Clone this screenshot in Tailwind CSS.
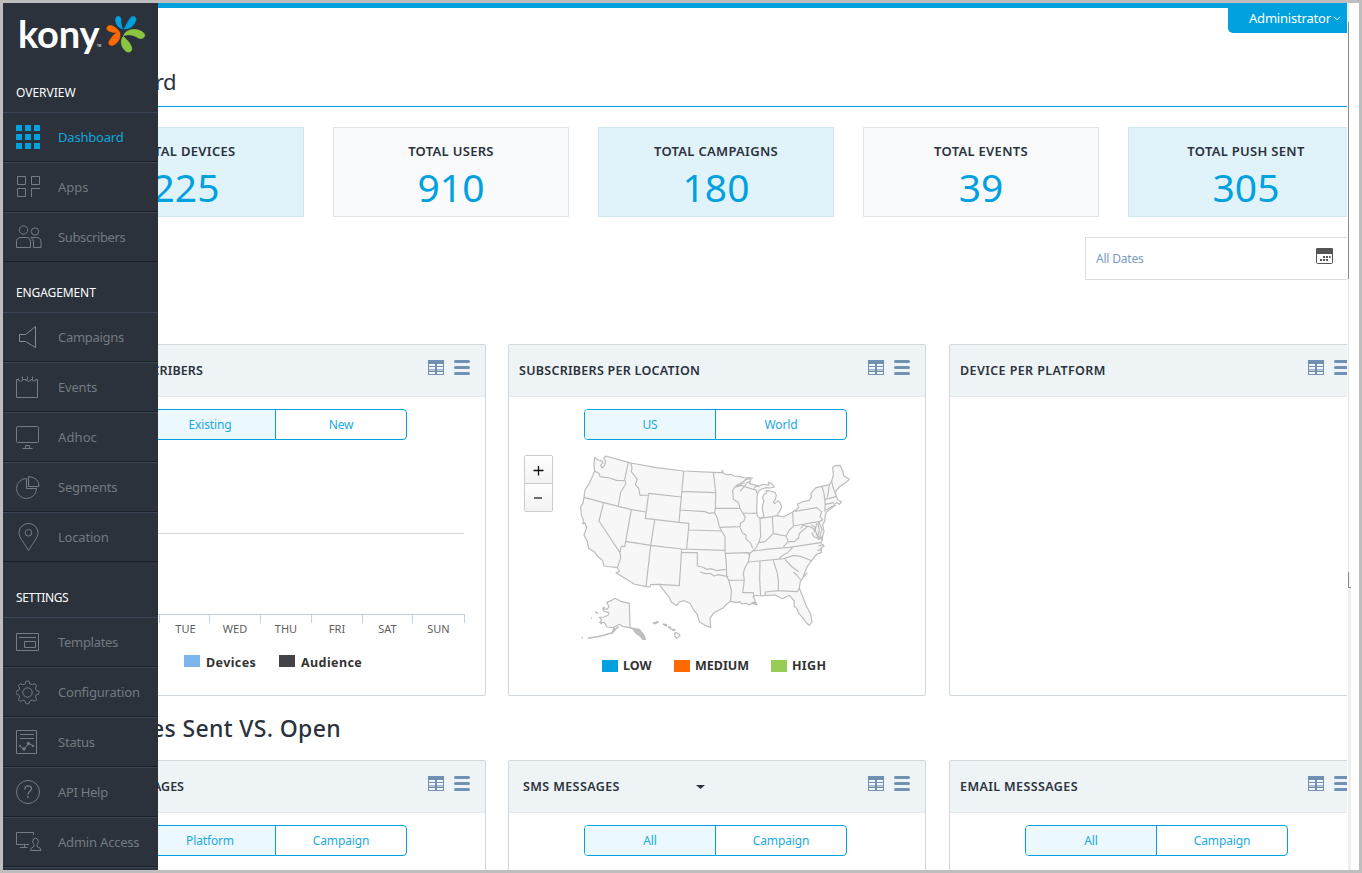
<!DOCTYPE html>
<html lang="en">
<head>
<meta charset="utf-8">
<title>Kony Dashboard</title>
<script src="https://cdn.jsdelivr.net/npm/@tailwindcss/browser@4"></script>
</head>
<body class="h-[873px] w-[1362px] overflow-hidden bg-white font-['Noto_Sans','Open_Sans',sans-serif] text-[#2a323c]">
<svg class="hidden">
  <symbol id="table" viewBox="0 0 48 45"><path fill="#7091b1" d="M0 0h48v45H0z"/><path fill="#f4f8fa" d="M3 12h18v6H3zM27 12h18v6H27zM3 21h18v6H3zM27 21h18v6H27zM3 36h18v6H3zM27 36h18v6H27z"/><path fill="#b5c6d7" d="M3 28h18v5H3zM27 28h18v5H27z"/></symbol>
  <symbol id="bars" viewBox="0 0 48 45"><path stroke="#7091b1" stroke-width="9" stroke-linecap="round" d="M4.500 4.500h39M4.500 22.500h39M4.500 40.500h39"/></symbol>
</svg>
<div class="relative flex h-full border-[3px] border-[#bebebe] bg-white">
  <main class="h-[867px] w-[1344px] shrink-0 overflow-hidden">
    <div class="flex h-[30px] items-start justify-end border-t-[5px] border-[#00a1de]">
      <div class="flex h-[25px] w-[119px] shrink-0 items-start rounded-bl-[5px] bg-[#00a1de] pl-[21px] text-[13px] leading-[20px] tracking-[-0.200px] text-white">Administrator<svg class="ml-[2px] mt-[8px] h-[5px] w-[8px]" viewBox="0 0 8 5" fill="none" stroke="#fff"><path d="M1 .8 4 3.800 7 .8"/></svg></div>
    </div>
    <div class="flex h-[74px] items-end border-b border-[#00a1de] pb-[10px] pl-[64px]"><h1 class="w-[109px] text-right text-[22px] leading-[30px] tracking-[-0.500px]">rd</h1></div>
    <section class="mt-5 flex gap-[29px] pl-[65px] text-center">
      <div class="h-[90px] w-[236px] shrink-0 border border-[#d3e6ef] bg-[#e1f3fa] pt-[13px]"><div class="text-[13px] font-semibold leading-[20px] tracking-[0.300px]">TOTAL DEVICES</div><div class="text-[39px] leading-[51px] text-[#00a1de]">225</div></div>
      <div class="h-[90px] w-[236px] shrink-0 border border-[#e2e5e6] bg-[#f8fafc] pt-[13px]"><div class="text-[13px] font-semibold leading-[20px] tracking-[0.300px]">TOTAL USERS</div><div class="text-[39px] leading-[51px] text-[#00a1de]">910</div></div>
      <div class="h-[90px] w-[236px] shrink-0 border border-[#d3e6ef] bg-[#e1f3fa] pt-[13px]"><div class="text-[13px] font-semibold leading-[20px] tracking-[0.300px]">TOTAL CAMPAIGNS</div><div class="text-[39px] leading-[51px] text-[#00a1de]">180</div></div>
      <div class="h-[90px] w-[236px] shrink-0 border border-[#e2e5e6] bg-[#f8fafc] pt-[13px]"><div class="text-[13px] font-semibold leading-[20px] tracking-[0.300px]">TOTAL EVENTS</div><div class="text-[39px] leading-[51px] text-[#00a1de]">39</div></div>
      <div class="h-[90px] w-[236px] shrink-0 border border-[#d3e6ef] bg-[#e1f3fa] pt-[13px]"><div class="text-[13px] font-semibold leading-[20px] tracking-[0.300px]">TOTAL PUSH SENT</div><div class="text-[39px] leading-[51px] text-[#00a1de]">305</div></div>
    </section>
    <div class="ml-[1082px] mt-5 flex h-[43px] w-[262px] items-center justify-between border-y border-l border-[#dcdcdc] pl-[10px] pr-[14px]">
      <span class="text-[12px] tracking-[-0.200px] text-[#7b9bbd]">All Dates</span>
      <svg class="mb-[5px] h-4 w-[17px]" viewBox="0 0 17 16"><rect x=".5" y=".5" width="16" height="15" rx="1" fill="#fff" stroke="#555"/><path fill="#555" d="M0 1l1-1h15l1 1v5H0zM7 8h2v2H7zM10 8h2v2h-2zM13 8h1.500v2H13zM4 11h2v2H4zM7 11h2v2H7zM10 11h2v2h-2z"/></svg>
    </div>
    <section class="mt-16 flex gap-[22px] pl-[65px]">
      <div class="h-[352px] w-[418px] shrink-0 rounded-[2px] border border-[#d0d7dd]">
        <div class="flex h-[52px] items-start border-b border-[#e2e8eb] bg-[#eef3f6] pt-[15px]">
          <h2 class="mt-px w-[134px] whitespace-nowrap text-right text-[12.500px] font-semibold leading-[20px] tracking-[0.100px]">SUBSCRIBERS</h2>
          <svg class="ml-auto h-[15px] w-4"><use href="#table"/></svg><svg class="ml-[10px] mr-[15px] h-[15px] w-4"><use href="#bars"/></svg>
        </div>
        <div class="ml-[75px] mt-3 flex h-[31px] w-[263px] rounded-[4px] border border-[#00a1de] text-center text-[12px] leading-[29px] tracking-[-0.150px] text-[#1ba9df]"><div class="w-[131px] rounded-l-[3px] border-r border-[#00a1de] bg-[#ebf8fe]">Existing</div><div class="flex-1">New</div></div>
        <div class="mr-[21px] mt-[93px] h-px bg-[#d5d8da]"></div>
        <div class="ml-[39px] mt-[80px] flex w-[357px] border-t border-r border-[#c0d0e0] text-center text-[11px] text-[#606060]">
          <div class="h-[8px] w-[51px] border-l border-[#c0d0e0] pt-[6px]">MON</div><div class="h-[8px] w-[50px] border-l border-[#c0d0e0] pt-[6px] pl-[2px]">TUE</div><div class="h-[8px] w-[51px] border-l border-[#c0d0e0] pt-[6px]">WED</div><div class="h-[8px] w-[51px] border-l border-[#c0d0e0] pt-[6px]">THU</div><div class="h-[8px] w-[51px] border-l border-[#c0d0e0] pt-[6px]">FRI</div><div class="h-[8px] w-[50px] border-l border-[#c0d0e0] pt-[6px]">SAT</div><div class="h-[8px] w-[52px] border-l border-[#c0d0e0] pt-[6px]">SUN</div>
        </div>
        <div class="ml-[115px] mt-[30px] flex items-center text-[12.500px] font-bold leading-[20px] tracking-[0.400px] text-[#333]"><i class="mb-[4px] mr-[6px] h-3 w-4 bg-[#7cb5ec]"></i><span class="w-[73px]">Devices</span><i class="mb-[4px] mr-[6px] h-3 w-4 bg-[#434348]"></i>Audience</div>
      </div>
      <div class="h-[352px] w-[418px] shrink-0 rounded-[2px] border border-[#d0d7dd]">
        <div class="flex h-[52px] items-start border-b border-[#e2e8eb] bg-[#eef3f6] pl-[10px] pt-[15px]">
          <h2 class="mt-px whitespace-nowrap text-[12.500px] font-semibold leading-[20px] tracking-[0.270px]">SUBSCRIBERS PER LOCATION</h2>
          <svg class="ml-auto h-[15px] w-4"><use href="#table"/></svg><svg class="ml-[10px] mr-[15px] h-[15px] w-4"><use href="#bars"/></svg>
        </div>
        <div class="ml-[75px] mt-3 flex h-[31px] w-[263px] rounded-[4px] border border-[#00a1de] text-center text-[12px] leading-[29px] tracking-[-0.150px] text-[#1ba9df]"><div class="w-[131px] rounded-l-[3px] border-r border-[#00a1de] bg-[#ebf8fe]">US</div><div class="flex-1">World</div></div>
        <div class="flex h-[216px] pt-[14px]">
          <div class="ml-[15px] mt-[1px] h-[57px] w-[29px] rounded-[2px] border border-[#ccc]"><div class="flex h-[28px] items-center justify-center border-b border-[#ccc] bg-linear-to-b from-white to-[#f2f2f2]"><svg class="mr-px mt-px h-[11px] w-[11px]" viewBox="0 0 11 11" stroke="#111" stroke-width="1.300"><path d="M.5 5.500h10M5.500 1v9.500"/></svg></div><div class="flex h-[27px] items-center justify-center bg-linear-to-b from-white to-[#f2f2f2]"><svg class="mr-px h-[9px] w-2" viewBox="0 0 8 9" stroke="#111" stroke-width="1.200"><path d="M0 5h8"/></svg></div></div>
          <svg class="ml-[25px] h-[188px] w-[274px]" viewBox="204 42 822 564" fill="#f7f7f7" stroke="#bcbcbc" stroke-width="3.500" stroke-linejoin="round">
            <path d="M254 52 264 60 275 62 279 68 272 76 276 84 284 76 286 62 281 54 288 48 355 67 362 69 440 83 521 93 610 97 636 98 636 91 640 100 650 104 662 103 672 108 688 109 704 114 722 113 707 120 694 128 677 139 692 136 703 139 711 128 722 122 718 131 730 134 745 139 760 133 776 135 775 127 787 133 793 141 781 144 769 143 756 147 748 151 743 161 741 170 741 185 740 200 740 220 744 231 752 235 762 228 758 215 757 200 762 182 757 174 762 163 769 160 768 152 782 153 795 158 799 166 796 178 790 187 794 191 804 182 810 188 815 201 811 211 806 217 802 227 820 231 848 216 866 203 862 192 882 184 897 182 905 170 902 160 918 143 936 139 958 134 965 124 970 105 968 82 976 77 990 76 998 92 1001 107 1018 118 1006 129 991 138 980 150 976 160 980 171 984 180 995 185 988 193 982 188 975 191 970 200 955 212 948 218 945 230 945 242 938 254 942 275 938 288 936 302 932 308 942 318 933 325 934 338 921 342 914 350 905 362 894 376 887 390 880 410 870 428 868 445 880 475 890 500 902 522 906 546 898 556 890 550 880 535 866 520 860 505 852 498 853 483 838 466 818 476 808 472 795 465 770 466 752 468 738 466 729 471 736 481 732 487 742 494 725 490 718 495 708 490 695 492 690 485 680 488 662 484 650 492 640 503 612 518 600 535 602 562 585 556 568 545 562 524 550 508 540 490 522 482 508 486 500 497 484 486 477 470 468 460 448 433 422 434 420 441 408 440 372 432 345 415 318 398 328 394 322 383 282 378 278 362 262 348 254 337 236 325 232 305 222 285 230 262 224 248 218 252 220 240 214 225 212 200 219 190 222 172 225 150 238 130 248 107 254 92 252 75Z"/>
            <g fill="none"><path d="M254 94 266 99 270 110 298 114 320 121 344 122M355 67 344 118 348 130 338 148 332 156 325 198M362 69 366 82 364 95 376 110 382 118 376 133 386 145 390 166 416 165M416 160 514 171M416 160 406 235 507 247 514 171 521 93M222 172 281 188 364 209 408 216M281 188 267 243 330 338 332 355 322 383M364 209 347 304 344 320 334 318 330 338M434 240 422 316M347 304 422 316 515 327 645 331M422 316 408 440M507 247 537 250 530 326M515 327 508 437 448 433M517 154 616 158M610 97 614 130 617 158 616 205M514 171 510 210 585 215 598 220 614 218 616 205 690 205M614 218 622 234 628 260 635 273 645 290 645 331M537 270 635 273M628 262 692 260M690 205 698 219 706 232 701 244 692 248 690 262 697 278 708 286 708 296 722 310 728 325M677 139 668 150 670 178 686 188 690 205M703 139 720 145 738 150 741 160M698 219 740 220M750 234 752 290 745 310 737 325 728 333 720 340 715 365 704 385 700 400 703 420 698 458 730 458 732 470M752 235 787 230 802 227M787 230 790 282M745 308 765 305 780 290 790 280 805 284 828 288 838 270 850 260 848 215M515 337 562 338 562 378 577 381 590 388 605 386 620 392 648 388M570 396 586 401 600 400 612 408 625 404 655 410M645 331 649 370 650 408 656 421 664 450 662 484M648 340 718 338 716 345M656 421 703 420M728 333 790 326 838 322 932 308M715 366 822 356M848 322 833 338 820 345 808 354M822 356 850 346 875 350 905 362M825 358 843 378 866 395M850 396 860 405 872 420M892 398 880 412M750 364 749 420 752 468M790 361 802 400 805 420 805 454M767 466 765 456 805 452 862 455 868 445M820 320 835 305 828 288M835 305 852 305 866 294 868 280 880 270 892 260 880 255 872 266M850 258 930 244M892 258 905 262 918 275 920 285 938 300M855 214 920 203 935 215 930 230 938 240 930 244 924 252 928 270 922 290M936 139 942 160 945 185 945 215M958 134 955 155 952 172M945 178 970 172 978 170M945 193 972 188M965 124 970 145 978 165M948 210 965 200 978 196M680 142 695 132 704 128M704 120 716 115M690 154 703 140M905 255 915 262 912 278M928 250 936 268 930 285 936 296M920 250 916 270 926 300"/>
            <path d="M725 488 740 488M905 278 912 290 930 298M718 120 728 114M732 145 742 136 748 141M925 318 940 314M922 332 936 328"/></g>
            <path d="M358 490 336 485 315 475 303 482 290 487 297 500 291 508 278 506 282 514 297 518 294 526 282 531 268 532 275 540 271 547 284 548 290 561 312 562 328 553 340 560 360 563Z"/>
            <path fill="none" stroke-width="4.500" d="M313 563 306 580 318 566 326 560M306 578 284 585 262 590 233 595M215 593h4M256 515l8 6M243 533l2 3M278 505l6-4M268 546l8 6"/>
            <path fill="#bfbfbf" d="M360 563 372 566 388 568 402 585 406 598 398 598 390 588 378 580 370 568ZM430 549l13-4 2 2-12 5zM459 552l11 2-2 5zM475 560l7 2 0 5zM483 567l12 2-3 3z"/>
            <path d="M495 577 508 583 510 587 500 595 494 588Z"/>
          </svg>
        </div>
        <div class="ml-[93px] flex items-center text-[12.500px] font-bold leading-[20px] text-[#333]"><i class="mb-px mr-[5px] h-3 w-4 bg-[#00a1de]"></i><span class="w-[51px]">LOW</span><i class="mb-px mr-[5px] h-3 w-4 bg-[#ff6a00]"></i><span class="w-[76px]">MEDIUM</span><i class="mb-px mr-[5px] h-3 w-4 bg-[#99cc55]"></i><span class="tracking-[0.300px]">HIGH</span></div>
      </div>
      <div class="ml-px h-[352px] w-[418px] shrink-0 rounded-[2px] border border-[#d0d7dd]">
        <div class="flex h-[52px] items-start border-b border-[#e2e8eb] bg-[#eef3f6] pl-[10px] pt-[15px]">
          <h2 class="mt-px whitespace-nowrap text-[12.500px] font-semibold leading-[20px] tracking-[0.400px]">DEVICE PER PLATFORM</h2>
          <svg class="ml-auto h-[15px] w-4"><use href="#table"/></svg><svg class="ml-[10px] mr-[16px] h-[15px] w-4"><use href="#bars"/></svg>
        </div>
      </div>
    </section>
    <h2 class="flex h-16 w-[338px] items-center justify-end whitespace-nowrap text-[23px] font-medium tracking-[0.350px]">es Sent VS. Open</h2>
    <section class="flex gap-[22px] pl-[65px]">
      <div class="h-[352px] w-[418px] shrink-0 rounded-[2px] border border-[#d0d7dd]">
        <div class="flex h-[52px] items-start border-b border-[#e2e8eb] bg-[#eef3f6] pt-[15px]">
          <h2 class="mt-px w-[115px] whitespace-nowrap text-right text-[12.500px] font-semibold leading-[20px]">AGES</h2>
          <svg class="ml-auto h-[15px] w-4"><use href="#table"/></svg><svg class="ml-[10px] mr-[15px] h-[15px] w-4"><use href="#bars"/></svg>
        </div>
        <div class="ml-[75px] mt-3 flex h-[31px] w-[263px] rounded-[4px] border border-[#00a1de] text-center text-[12px] leading-[29px] tracking-[-0.150px] text-[#1ba9df]"><div class="w-[131px] rounded-l-[3px] border-r border-[#00a1de] bg-[#ebf8fe]">Platform</div><div class="flex-1">Campaign</div></div>
      </div>
      <div class="h-[352px] w-[418px] shrink-0 rounded-[2px] border border-[#d0d7dd]">
        <div class="flex h-[52px] items-start border-b border-[#e2e8eb] bg-[#eef3f6] pl-[14px] pt-[15px]">
          <h2 class="mt-px w-[173px] whitespace-nowrap text-[12.500px] font-semibold leading-[20px] tracking-[0.400px]">SMS MESSAGES</h2><svg class="mt-[9px] h-[4px] w-[9px]" viewBox="0 0 9 4"><path fill="#2a323c" d="M0 0h9L4.500 4z"/></svg>
          <svg class="ml-auto h-[15px] w-4"><use href="#table"/></svg><svg class="ml-[10px] mr-[15px] h-[15px] w-4"><use href="#bars"/></svg>
        </div>
        <div class="ml-[75px] mt-3 flex h-[31px] w-[263px] rounded-[4px] border border-[#00a1de] text-center text-[12px] leading-[29px] tracking-[-0.150px] text-[#1ba9df]"><div class="w-[131px] rounded-l-[3px] border-r border-[#00a1de] bg-[#ebf8fe]">All</div><div class="flex-1">Campaign</div></div>
      </div>
      <div class="ml-px h-[352px] w-[418px] shrink-0 rounded-[2px] border border-[#d0d7dd]">
        <div class="flex h-[52px] items-start border-b border-[#e2e8eb] bg-[#eef3f6] pl-[10px] pt-[15px]">
          <h2 class="mt-px whitespace-nowrap text-[12.500px] font-semibold leading-[20px] tracking-[0.400px]">EMAIL MESSSAGES</h2>
          <svg class="ml-auto h-[15px] w-4"><use href="#table"/></svg><svg class="ml-[10px] mr-[16px] h-[15px] w-4"><use href="#bars"/></svg>
        </div>
        <div class="ml-[75px] mt-3 flex h-[31px] w-[263px] rounded-[4px] border border-[#00a1de] text-center text-[12px] leading-[29px] tracking-[-0.150px] text-[#1ba9df]"><div class="w-[131px] rounded-l-[3px] border-r border-[#00a1de] bg-[#ebf8fe]">All</div><div class="flex-1">Campaign</div></div>
      </div>
    </section>
  </main>
  <div class="ml-px flex w-[3px] flex-col">
    <div class="h-[19px] w-px bg-[#e4e4e4]"></div><div class="h-[257px] w-px bg-[#8a8a8a]"></div><div class="h-[293px] w-px bg-[#e2e2e2]"></div><div class="h-4 w-[3px] border-b border-l border-[#8a8a8a] bg-[#f5f5f5]"></div><div class="w-[3px] flex-1 bg-[#eeeeee]"></div>
  </div>

  <nav class="absolute left-0 top-0 h-[867px] w-[155px] overflow-hidden bg-[#2b323b] text-[13px] tracking-[-0.200px] text-[#737a80]">
    <div class="flex h-[80px] items-start pl-[15px] pt-[8px]">
      <div class="w-[79px] font-['Lato'] text-[38px] font-bold leading-[45px] tracking-[-0.200px] text-white">kony</div>
      <div class="mt-[33px] w-[6px] text-[3px] leading-[4px] text-white">TM</div>
      <svg class="ml-[3px] mt-[4px] h-[38px] w-10" viewBox="318 46 120 114" stroke-width="2" stroke-linejoin="round">
        <path fill="#00a1de" stroke="#00a1de" d="M347 56C350 47 361 48 363 58C362 69 364 78 368 88C352 84 345 68 347 56ZM392 54C401 46 411 54 407 63C401 79 390 88 372 88C380 77 383 64 392 54Z"/>
        <path fill="#ff6a00" stroke="#ff6a00" d="M321 84C324 75 336 77 343 82C350 87 355 90 359 99C350 97 342 100 333 96C324 94 319 90 321 84ZM359 98C363 115 354 132 338 137C327 139 323 130 330 121C337 111 343 100 359 98Z"/>
        <path fill="#8cc63f" stroke="#8cc63f" d="M371 108C377 87 415 82 433 102C438 113 426 120 415 115C403 107 388 102 371 108ZM370 110C382 122 398 138 395 151C391 160 379 159 373 150C363 139 360 121 370 110Z"/>
      </svg>
    </div>
    <div class="h-[29px] pl-[13px] text-[12px] leading-[20px] tracking-normal text-white">OVERVIEW</div>
    <div class="flex h-[50px] items-center border-b border-t border-t-[#3a4556] border-b-[#1b2024] pl-[13px] text-[#11a6df]"><svg class="mr-[16px] h-[26px] w-[26px]" viewBox="0 0 26 26" fill="#00a1de"><path d="M0 1h6v6H0zM9 1h6v6H9zM18 1h6v6h-6zM0 10h6v6H0zM9 10h6v6H9zM18 10h6v6h-6zM0 19h6v6H0zM9 19h6v6H9zM18 19h6v6h-6z"/></svg><span class="mt-[2px]">Dashboard</span></div>
    <div class="flex h-[50px] items-center border-b border-t border-t-[#3a4556] border-b-[#1b2024] pl-[13px]"><svg class="mr-[16px] h-[26px] w-[26px]" viewBox="0 0 26 26" fill="none" stroke="#777c82"><path d="M1.500 2.500h8v8h-8zM15.500 2.500h8v8h-8zM1.500 14.500h8v8h-8zM15.500 23v-8.500H24"/></svg><span class="mt-[2px] tracking-normal">Apps</span></div>
    <div class="flex h-[50px] items-center border-b border-t border-t-[#3a4556] border-b-[#1b2024] pl-[13px]"><svg class="mr-[16px] h-[26px] w-[26px]" viewBox="0 0 26 26" fill="none" stroke="#777c82"><circle cx="7.500" cy="6" r="4.200"/><circle cx="19" cy="7.500" r="3.700"/><path d="M.5 23.500V18Q.5 13.500 5 13.500h5Q14.500 13.500 14.500 18v5.500zM15 13.500h5.500Q25 13.500 25 18v5.500h-7.500V18Q17.500 15 15 13.500"/></svg><span class="mt-[2px] tracking-[-0.350px]">Subscribers</span></div>
    <div class="h-[50px] pl-[13px] pt-[21px] text-[12px] leading-[20px] tracking-[-0.100px] text-white">ENGAGEMENT</div>
    <div class="flex h-[50px] items-center border-b border-t border-t-[#3a4556] border-b-[#1b2024] pl-[13px]"><svg class="mr-[16px] h-[26px] w-[26px]" viewBox="0 0 26 26" fill="none" stroke="#858a8f"><path d="M3.500 10.500h6L19.500 2.500v21L9.500 17.500h-6z"/></svg><span class="mt-[2px] tracking-[-0.300px]">Campaigns</span></div>
    <div class="flex h-[50px] items-center border-b border-t border-t-[#3a4556] border-b-[#1b2024] pl-[13px]"><svg class="mr-[16px] h-[26px] w-[26px]" viewBox="0 0 26 26" fill="none" stroke="#777c82"><path d="M2.500 5.500h-2v18h21v-18h-2M2.500 4.500v2q2 1.500 4 0v-1h3.500M6.500 2.500v3M10 5v1.500q2.500 1.500 5 0v-1h1.500M11.500 2.500v3M16.500 5.500v1q1.500 1 3 0v-1M16.500 2.500v3"/></svg><span class="mt-[2px]">Events</span></div>
    <div class="flex h-[50px] items-center border-b border-t border-t-[#3a4556] border-b-[#1b2024] pl-[13px]"><svg class="mr-[16px] h-[26px] w-[26px]" viewBox="0 0 26 26" fill="none" stroke="#777c82"><rect x=".5" y="2.500" width="22" height="16" rx="1"/><path d="M6.500 24.500h10M9.500 24v-2.500h4V24"/></svg><span class="mt-[2px] tracking-[0.100px]">Adhoc</span></div>
    <div class="flex h-[50px] items-center border-b border-t border-t-[#3a4556] border-b-[#1b2024] pl-[13px]"><svg class="mr-[16px] h-[26px] w-[26px]" viewBox="0 0 26 26" fill="none" stroke="#777c82"><path d="M10.500 4.500a10 10 0 1 0 10 10h-10zM12.500 2.500v10h10.500q0-9-10.500-10z"/></svg><span class="mt-[2px]">Segments</span></div>
    <div class="flex h-[50px] items-center border-b border-t border-t-[#3a4556] border-b-[#1b2024] pl-[13px]"><svg class="mr-[16px] h-[30px] w-[26px]" viewBox="0 0 26 30" fill="none" stroke="#777c82"><path d="M12.500 28.500C9 22 3 16 3 10.500a9.500 9 0 0 1 19 0C22 16 16 22 12.500 28.500z"/><circle cx="12.500" cy="10.800" r="3.300"/></svg><span class="mt-[2px]">Location</span></div>
    <div class="h-[55px] pl-[13px] pt-[26px] text-[12px] leading-[20px] tracking-[-0.400px] text-white">SETTINGS</div>
    <div class="flex h-[50px] items-center border-b border-t border-t-[#3a4556] border-b-[#1b2024] pl-[13px]"><svg class="mr-[16px] h-[26px] w-[26px]" viewBox="0 0 26 26" fill="none" stroke="#777c82"><path d="M.5 4.500h22v17H.5zM8.500 12.500h11v6h-11zM3 8.500h17"/></svg><span class="mt-[2px] tracking-[-0.300px]">Templates</span></div>
    <div class="flex h-[50px] items-center border-b border-t border-t-[#3a4556] border-b-[#1b2024] pl-[13px]"><svg class="mr-[16px] h-[26px] w-[26px]" viewBox="0 0 26 26" fill="none" stroke="#777c82" stroke-linejoin="round"><path d="M9.300 4.800Q10 2 10.300 2h2.400Q13 2 13.700 4.800Q15 5.800 16.500 5.500Q18.500 4.500 19 4.800L20.500 6.300Q20.500 7 19.500 8.800Q19.400 10.500 20.500 11.600Q23 12 23 12.500v2.200Q23 15.200 20.500 15.700Q19.300 17 19.700 18.300Q20.800 20.300 20.500 20.800L19 22.300Q18.500 22.300 16.500 21.200Q14.800 21.200 13.700 22.300Q13 24.800 12.700 24.800h-2.400Q10 24.800 9.300 22.300Q8 21 6.500 21.300Q4.500 22.400 4 22.300L2.500 20.800Q2.300 20.300 3.500 18.300Q3.700 17 2.500 15.700Q0 15.200 0 14.700v-2.200Q0 12 2.500 11.600Q3.700 10.300 3.500 8.800Q2.300 7 2.500 6.300L4 4.800Q4.500 4.500 6.500 5.500Q8.200 5.900 9.300 4.800z"/><circle cx="11.500" cy="13.500" r="4.700"/></svg><span class="mt-[2px]">Configuration</span></div>
    <div class="flex h-[50px] items-center border-b border-t border-t-[#3a4556] border-b-[#1b2024] pl-[13px]"><svg class="mr-[16px] h-[26px] w-[26px]" viewBox="0 0 26 26" fill="none" stroke="#777c82"><path d="M.5 1.500h20v23H.5zM4 5.500h14M4 9.500h14"/><path d="M4 17 8 20.500 12.500 14.500 18 17"/><g fill="#858a8f"><circle cx="4" cy="17" r=".7"/><circle cx="8" cy="20" r="1.200"/><circle cx="12.500" cy="14.500" r="1.200"/><circle cx="17" cy="17" r=".8"/></g></svg><span class="mt-[2px]">Status</span></div>
    <div class="flex h-[50px] items-center border-b border-t border-t-[#3a4556] border-b-[#1b2024] pl-[13px]"><svg class="mr-[16px] h-[26px] w-[26px]" viewBox="0 0 26 26" fill="none" stroke="#777c82"><circle cx="12" cy="13" r="11.500"/><path stroke-width="1.300" d="M8.800 10.500c0-5 6.700-4.500 6.700-1 0 2.500-3.500 3-3.500 6M12 17v2"/></svg><span class="mt-[2px] tracking-[-0.300px]">API Help</span></div>
    <div class="flex h-[50px] items-center border-b border-t border-t-[#3a4556] border-b-[#1b2024] pl-[13px]"><svg class="mr-[16px] h-[26px] w-[26px]" viewBox="0 0 26 26" fill="none" stroke="#777c82"><path d="M17.500 6V3.500H.5v12H13M8.500 16v3M4 18.500h7.500M14.500 21.500q0-3 3.500-4v-2q-2-2-1-5 2.500-3 5 0 1 3-1 5v2q4 1 4 4z"/></svg><span class="mt-[2px]">Admin Access</span></div>
    <div class="h-px bg-[#3a4556]"></div>
  </nav>
</div>
</body>
</html>
